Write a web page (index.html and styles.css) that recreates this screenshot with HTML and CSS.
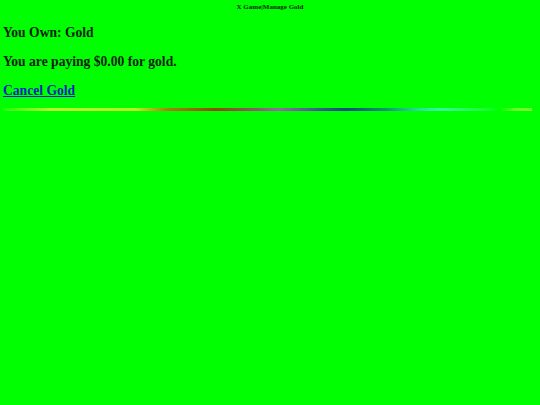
FILE: index.html
```html
<!DOCTYPE html>
<html>
<head>
<meta charset="utf-8">
<title>X Game|Manage Gold</title>
<link rel="stylesheet" href="styles.css">
</head>
<body>
<div class="page">
  <div class="title">X Game|Manage Gold</div>
  <h3 class="line">You Own: Gold</h3>
  <h3 class="line">You are paying $0.00 for gold.</h3>
  <h3 class="line last"><a class="cancel" href="#">Cancel Gold</a></h3>
  <div class="rule"></div>
</div>
</body>
</html>
```

FILE: styles.css
```css
html, body {
  margin: 0;
  padding: 0;
  background: #00ff00;
}
body {
  font-family: "Liberation Serif", "Times New Roman", serif;
  color: #000;
}
.page {
  padding: 3px 0 0 3px;
}
.title {
  text-align: center;
  font-weight: bold;
  font-size: 7px;
  line-height: 8px;
  color: #0a240a;
  padding-right: 3px;
}
.line {
  font-size: 13.6px;
  line-height: 15.6px;
  font-weight: bold;
  margin: 13.4px 0;
  color: #0a1f0a;
}
.line:first-of-type {
  margin-top: 14.4px;
}
.line.last {
  margin-bottom: 9.5px;
}
.cancel {
  color: #0a1fc0;
  text-decoration: underline;
}
.rule {
  margin: 0 8px 0 0;
  height: 3px;
  background: linear-gradient(to right,
    rgba(200,255,40,0.2) 0%,
    #d8ff30 9%,
    #d8f020 25%,
    #c07010 31%,
    #a03000 40%,
    #a04080 48%,
    #b050c0 52%,
    #4040a0 60%,
    #103090 65%,
    #108080 72%,
    #30e0b0 79%,
    #40ffb0 83%,
    #20ff40 91%,
    #00ff00 94%,
    #80ff30 97%,
    #90ff30 100%);
  opacity: 0.85;
}
```
